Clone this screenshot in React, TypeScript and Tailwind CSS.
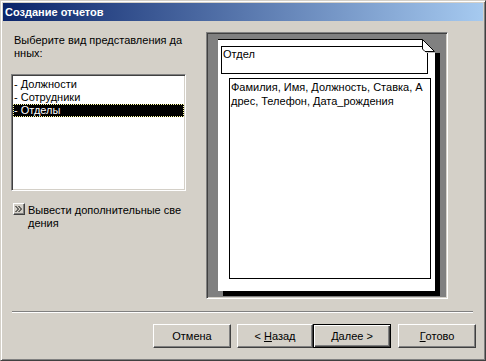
import React from "react";

const raised =
  "bg-[#d4d0c8] border border-t-white border-l-white border-r-[#404040] border-b-[#404040] shadow-[inset_-1px_-1px_0_#808080]";

function Btn({ w, children, def }: { w: string; children: React.ReactNode; def?: boolean }) {
  if (def) {
    return (
      <div
        className={`${w} h-[24px] flex items-center justify-center bg-[#d4d0c8] border border-black shadow-[inset_1px_1px_0_#fff,inset_-1px_-1px_0_#404040,inset_-2px_-2px_0_#808080]`}
      >
        {children}
      </div>
    );
  }
  return <div className={`${w} h-[24px] flex items-center justify-center ${raised}`}>{children}</div>;
}

export default function App() {
  return (
    <div className="w-[486px] h-[361px] box-border bg-[#d4d0c8] border border-t-[#d4d0c8] border-l-[#d4d0c8] border-r-[#404040] border-b-[#404040] shadow-[inset_1px_1px_0_#fff,inset_-1px_-1px_0_#808080] p-[2px] flex flex-col font-['Liberation_Sans',Arial,sans-serif] text-[11px] leading-[13px] text-black overflow-hidden">
      {/* Title bar */}
      <div className="h-[18px] shrink-0 bg-[linear-gradient(to_right,#0a246a,#a6caf0)] flex items-center pl-[2px] text-white font-bold">
        Создание отчетов
      </div>

      {/* Main */}
      <div className="flex pl-[8px] pt-[11px]">
        <div className="w-[175px] mt-[2px] flex flex-col">
          <div className="pl-[3px]">
            Выберите вид представления да
            <br />
            нных:
          </div>
          <div className="mt-[14px] h-[117px] bg-white border border-t-[#808080] border-l-[#808080] border-r-white border-b-white shadow-[inset_1px_1px_0_#404040,inset_-1px_-1px_0_#d4d0c8] pt-[3px] px-[1px] flex flex-col">
            <div className="h-[13px] pl-[1px]">- Должности</div>
            <div className="h-[13px] pl-[1px]">- Сотрудники</div>
            <div className="h-[13px] pl-[1px] bg-black text-white outline-1 outline-dotted outline-[#ffffa0] -outline-offset-1">
              - Отделы
            </div>
          </div>
          <div className="mt-[12px] ml-[2px] flex gap-[3px]">
            <div className={`w-[12px] h-[12px] shrink-0 flex items-center justify-center ${raised}`}>
              <svg width="8" height="6" viewBox="0 0 8 6" className="block">
                <polygon points="0,0 1,0 4,3 1,6 0,6 3,3" fill="#000" />
                <polygon points="3,0 4,0 7,3 4,6 3,6 6,3" fill="#000" />
              </svg>
            </div>
            <div className="mt-[1px]">
              Вывести дополнительные све
              <br />
              дения
            </div>
          </div>
        </div>

        {/* Preview */}
        <div className="ml-[20px] w-[242px] h-[267px] bg-[#808080] border border-t-[#808080] border-l-[#808080] border-r-white border-b-white shadow-[inset_1px_1px_0_#404040,inset_-1px_-1px_0_#d4d0c8] pl-[11px] pt-[6px]">
          <div className="relative w-[217px] h-[252px] bg-white border-t border-black shadow-[5px_5px_0_#000] flex flex-col">
            <div className="mt-[6px] ml-[3px] w-[207px] h-[28px] border border-black pl-[1px] pt-[1px]">Отдел</div>
            <div className="mt-[4px] ml-[11px] w-[202px] h-[201px] border border-black pl-[1px] pt-[1px] leading-[14px]">
              Фамилия, Имя, Должность, Ставка, А
              <br />
              дрес, Телефон, Дата_рождения
            </div>
            <svg
              width="20"
              height="16"
              viewBox="0 0 20 16"
              className="absolute left-[203px] top-[-1px]"
            >
              <polygon points="1,0 20,0 20,14 14,14 14,13" fill="#808080" />
              <polygon points="4,12 14,13 14,14 5,14" fill="#c0c0c0" />
              <polygon points="1.5,0.5 1.5,10 4,12.5 13.5,12.5" fill="#fff" stroke="#000" strokeWidth="1" />
            </svg>
          </div>
        </div>
      </div>

      {/* Separator */}
      <div className="mt-[12px] ml-[9px] w-[461px] h-[2px] border-t border-t-[#808080] border-b border-b-white" />

      {/* Buttons */}
      <div className="mt-[11px] flex pl-[150px]">
        <Btn w="w-[78px]">Отмена</Btn>
        <div className="ml-[6px]">
          <Btn w="w-[76px]">
            &lt; <span className="underline ml-[3px]">Н</span>азад
          </Btn>
        </div>
        <Btn w="w-[78px]" def>
          <span className="underline">Д</span>алее &gt;
        </Btn>
        <div className="ml-[7px]">
          <Btn w="w-[78px]">
            <span className="underline">Г</span>отово
          </Btn>
        </div>
      </div>
    </div>
  );
}
